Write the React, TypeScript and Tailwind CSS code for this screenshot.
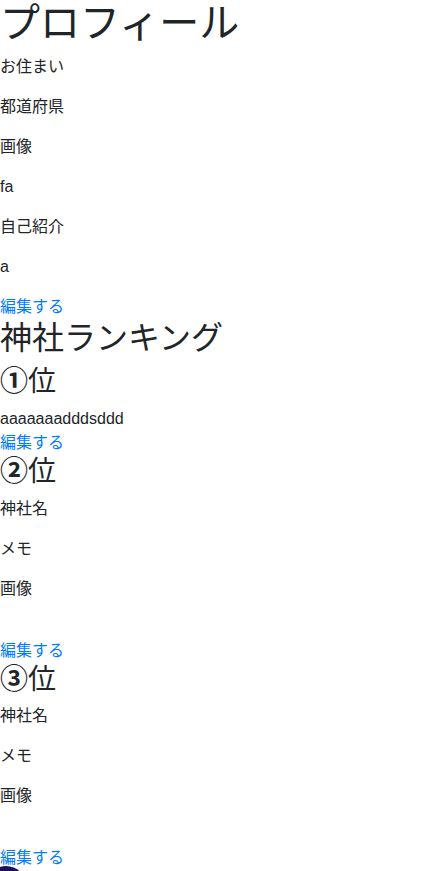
const FONT = "font-['Liberation_Sans','Noto_Sans_CJK_JP',sans-serif]";

const PROFILE = ["お住まい", "都道府県", "画像", "fa", "自己紹介", "a"];

function EditLink() {
  return (
    <div>
      <a href="#" className="text-[#007bff]">
        編集する
      </a>
    </div>
  );
}

function RankTitle({ rank }: { rank: string }) {
  return (
    <h3 className="mb-2 text-[28px] leading-[1.2] font-normal">
      <span className="font-bold">{rank}</span>位
    </h3>
  );
}

function RankEmpty({ rank }: { rank: string }) {
  return (
    <div>
      <RankTitle rank={rank} />
      <p className="mb-4">神社名</p>
      <p className="mb-4">メモ</p>
      <p className="mb-4">画像</p>
      {/* image placeholder, nothing uploaded */}
      <div className="h-[22px]" />
      <EditLink />
    </div>
  );
}

export default function App() {
  return (
    <div className={`${FONT} bg-white text-base leading-6 text-[#212529] min-h-[871px] overflow-hidden -mt-px`}>
      <h1 className="mb-2 text-[40px] leading-[1.2] font-normal">プロフィール</h1>
      {PROFILE.map((t) => (
        <p key={t} className="mb-4">
          {t}
        </p>
      ))}
      <EditLink />

      <h2 className="mb-2 text-[32px] leading-[1.2] font-normal">神社ランキング</h2>
      <div>
        <RankTitle rank="①" />
        <div>aaaaaaadddsddd</div>
        <EditLink />
      </div>
      <RankEmpty rank="②" />
      <RankEmpty rank="③" />
      <div className="h-3">
        <div className="-ml-[14px] -mt-[4px] h-10 w-10 rounded-full bg-[#1b0f5e]" />
      </div>
    </div>
  );
}
